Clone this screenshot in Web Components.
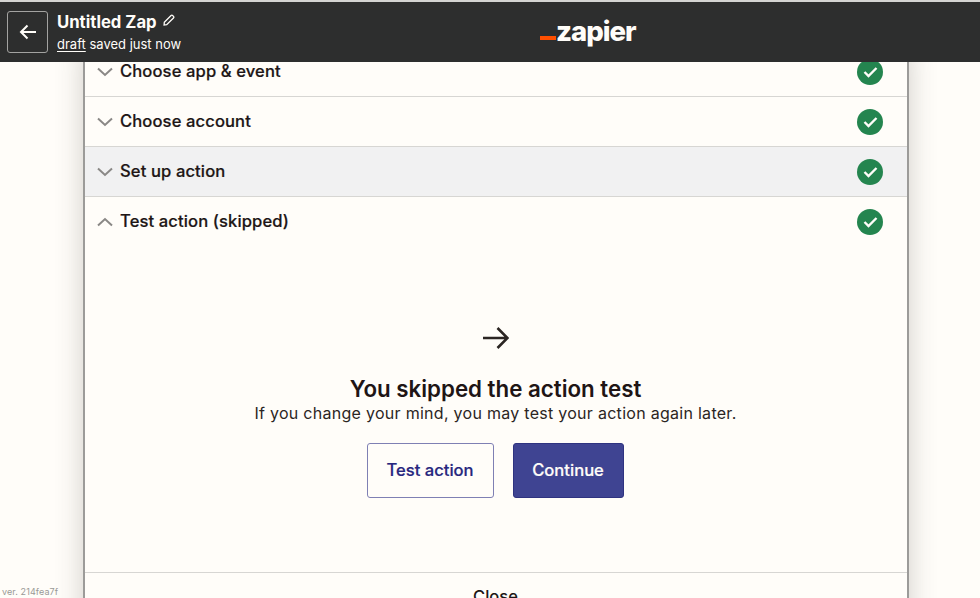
<!DOCTYPE html>
<html>
<head>
<meta charset="utf-8">
<title>Untitled Zap</title>
<style>
    html, body { margin: 0; height: 100%; overflow: hidden; }
    body { background: #fffdf9; font-family: Inter, "Liberation Sans", sans-serif; color: #201515; }
    zap-app { height: 598px; }
</style>
</head>
<body>
<zap-app>
    <zap-header slot="header" title="Untitled Zap"></zap-header>
    <step-row label="Choose app &amp; event"></step-row>
    <step-row label="Choose account"></step-row>
    <step-row label="Set up action" active></step-row>
    <step-row label="Test action (skipped)" open></step-row>
    <skipped-test></skipped-test>
    <panel-close></panel-close>
</zap-app>

<script>
class ZapApp extends HTMLElement {
    constructor() {
        super();
        this.attachShadow({mode: 'open'});
        this.shadowRoot.innerHTML = `
            <style>
                :host { display: flex; flex-direction: column; position: relative; }
                main { flex: 1; min-height: 0; overflow: hidden; display: flex; padding-left: 83px; }
                .panel {
                    width: 822px;
                    height: 600px;
                    margin-top: -15px;
                    flex: none;
                    background: #fffdf9;
                    border-left: 2px solid #9c9b99;
                    border-right: 2px solid #9c9b99;
                    box-shadow: 0 0 26px rgba(60, 55, 50, 0.24);
                    display: flex;
                    flex-direction: column;
                }
                .ver { position: absolute; left: 2px; bottom: 0; font-size: 9px; line-height: 12px; color: #9a9996; letter-spacing: 0.1px; }
            </style>
            <slot name="header"></slot>
            <main><div class="panel"><slot></slot></div></main>
            <div class="ver">ver. 214fea7f</div>
        `;
    }
}

class ZapHeader extends HTMLElement {
    constructor() {
        super();
        this.attachShadow({mode: 'open'});
        this.shadowRoot.innerHTML = `
            <style>
                :host { display: grid; grid-template-columns: 540px auto; align-items: center; height: 60px; border-top: 2px solid #d4d4d2; background: #2d2e2e; color: #fffdf9; position: relative; z-index: 2; }
                .left { display: flex; align-items: center; gap: 9px; padding-left: 7px; }
                .back { width: 39px; height: 40px; border: 1px solid #a3a3a1; border-radius: 3px; display: flex; align-items: center; justify-content: center; }
                .title { display: flex; align-items: center; gap: 6px; font-size: 16.7px; font-weight: 700; line-height: 20px; }
                .title svg { margin-top: -3px; }
                .sub { font-size: 13px; line-height: 18px; margin-top: 3px; }
                .sub u { text-underline-offset: 2px; }
                .logo { display: flex; align-items: flex-end; font-size: 27.500px; font-weight: 800; letter-spacing: -1px; line-height: 30px; margin-top: -2px; }
                .logo i { width: 16px; height: 4px; background: #ff4f00; margin-bottom: 6px; }
            </style>
            <div class="left">
                <div class="back">
                    <svg width="18" height="16" viewBox="0 0 18 16" fill="none" stroke="#fffdf9" stroke-width="2"><path d="M17 8H2M8.500 1.500 2 8l6.500 6.500"/></svg>
                </div>
                <div>
                    <div class="title"><span>${this.getAttribute("title")}</span>
                        <svg width="12" height="12" viewBox="0 0 11 11" fill="none" stroke="#fffdf9" stroke-width="1.200"><path d="M1.200 7.600 7.400 1.400a1 1 0 0 1 1.400 0l.8.8a1 1 0 0 1 0 1.400L3.400 9.800 1 10z"/></svg>
                    </div>
                    <div class="sub"><u>draft</u> saved just now</div>
                </div>
            </div>
            <div class="logo"><i></i><span>zapier</span></div>
        `;
    }
}

class StepRow extends HTMLElement {
    constructor() {
        super();
        this.attachShadow({mode: 'open'});
        let chevron = this.hasAttribute("open") ? "M1 8.500 8 2l7 6.500" : "M1 1.500 8 8l7-6.500";
        this.shadowRoot.innerHTML = `
            <style>
                :host { display: flex; align-items: center; height: 50px; flex: none; box-sizing: border-box; border-bottom: 1px solid #d7d6d3; padding: 0 24px 0 12px; font-size: 16.600px; font-weight: 500; letter-spacing: 0.1px; color: #201515; }
                :host([active]) { background: #f1f1f2; }
                :host([open]) { border-bottom: 0; }
                .chev { width: 16px; height: 10px; margin-right: 7px; }
                .label { flex: 1; margin-top: -2px; -webkit-text-stroke: 0.2px #201515; }
                .badge { width: 26px; height: 26px; border-radius: 50%; background: #24854f; display: flex; align-items: center; justify-content: center; }
            </style>
            <svg class="chev" viewBox="0 0 16 10" fill="none" stroke="#8a8886" stroke-width="2"><path d="${chevron}"/></svg>
            <span class="label">${this.getAttribute("label")}</span>
            <span class="badge"><svg width="15" height="12" viewBox="0 0 15 12" fill="none" stroke="#fffdf9" stroke-width="2.400"><path d="M1.500 6 5.500 10 13.500 2"/></svg></span>
        `;
    }
}

class SkippedTest extends HTMLElement {
    constructor() {
        super();
        this.attachShadow({mode: 'open'});
        this.shadowRoot.innerHTML = `
            <style>
                :host { display: flex; flex-direction: column; align-items: center; height: 325px; flex: none; box-sizing: border-box; padding: 80px 1px 0 0; }
                svg { display: block; }
                h2 { margin: 26px 0 0; font-size: 22.300px; line-height: 28px; font-weight: 600; color: #201515; }
                p { margin: 0; font-size: 16px; line-height: 21px; letter-spacing: 0.28px; color: #2b2523; }
                .actions { display: flex; gap: 19px; margin-top: 19px; margin-right: 1px; }
                button { font: 500 16.600px Inter, "Liberation Sans", sans-serif; height: 55px; border-radius: 3px; box-sizing: border-box; padding: 0 0 2px; -webkit-text-stroke: 0.2px; }
                .secondary { width: 127px; background: #fffdf9; color: #26267e; border: 1px solid #7f80b4; }
                .primary { width: 111px; background: #3f4492; color: #fffdf9; border: 1px solid #2f3380; }
            </style>
            <svg width="26" height="22" viewBox="0 0 26 22" fill="none" stroke="#2b2523" stroke-width="2.600"><path d="M0 11h24.500M14.500 1 24.500 11 14.500 21"/></svg>
            <h2>You skipped the action test</h2>
            <p>If you change your mind, you may test your action again later.</p>
            <div class="actions">
                <button class="secondary">Test action</button>
                <button class="primary">Continue</button>
            </div>
        `;
    }
}

class PanelClose extends HTMLElement {
    constructor() {
        super();
        this.attachShadow({mode: 'open'});
        this.shadowRoot.innerHTML = `
            <style>
                :host { display: block; border-top: 1px solid #d7d6d3; text-align: center; font-size: 16.500px; font-weight: 500; line-height: 20px; padding: 13px 1px 0 0; color: #201515; }
            </style>
            Close
        `;
    }
}

customElements.define("zap-app", ZapApp);
customElements.define("zap-header", ZapHeader);
customElements.define("step-row", StepRow);
customElements.define("skipped-test", SkippedTest);
customElements.define("panel-close", PanelClose);
</script>
</body>
</html>
